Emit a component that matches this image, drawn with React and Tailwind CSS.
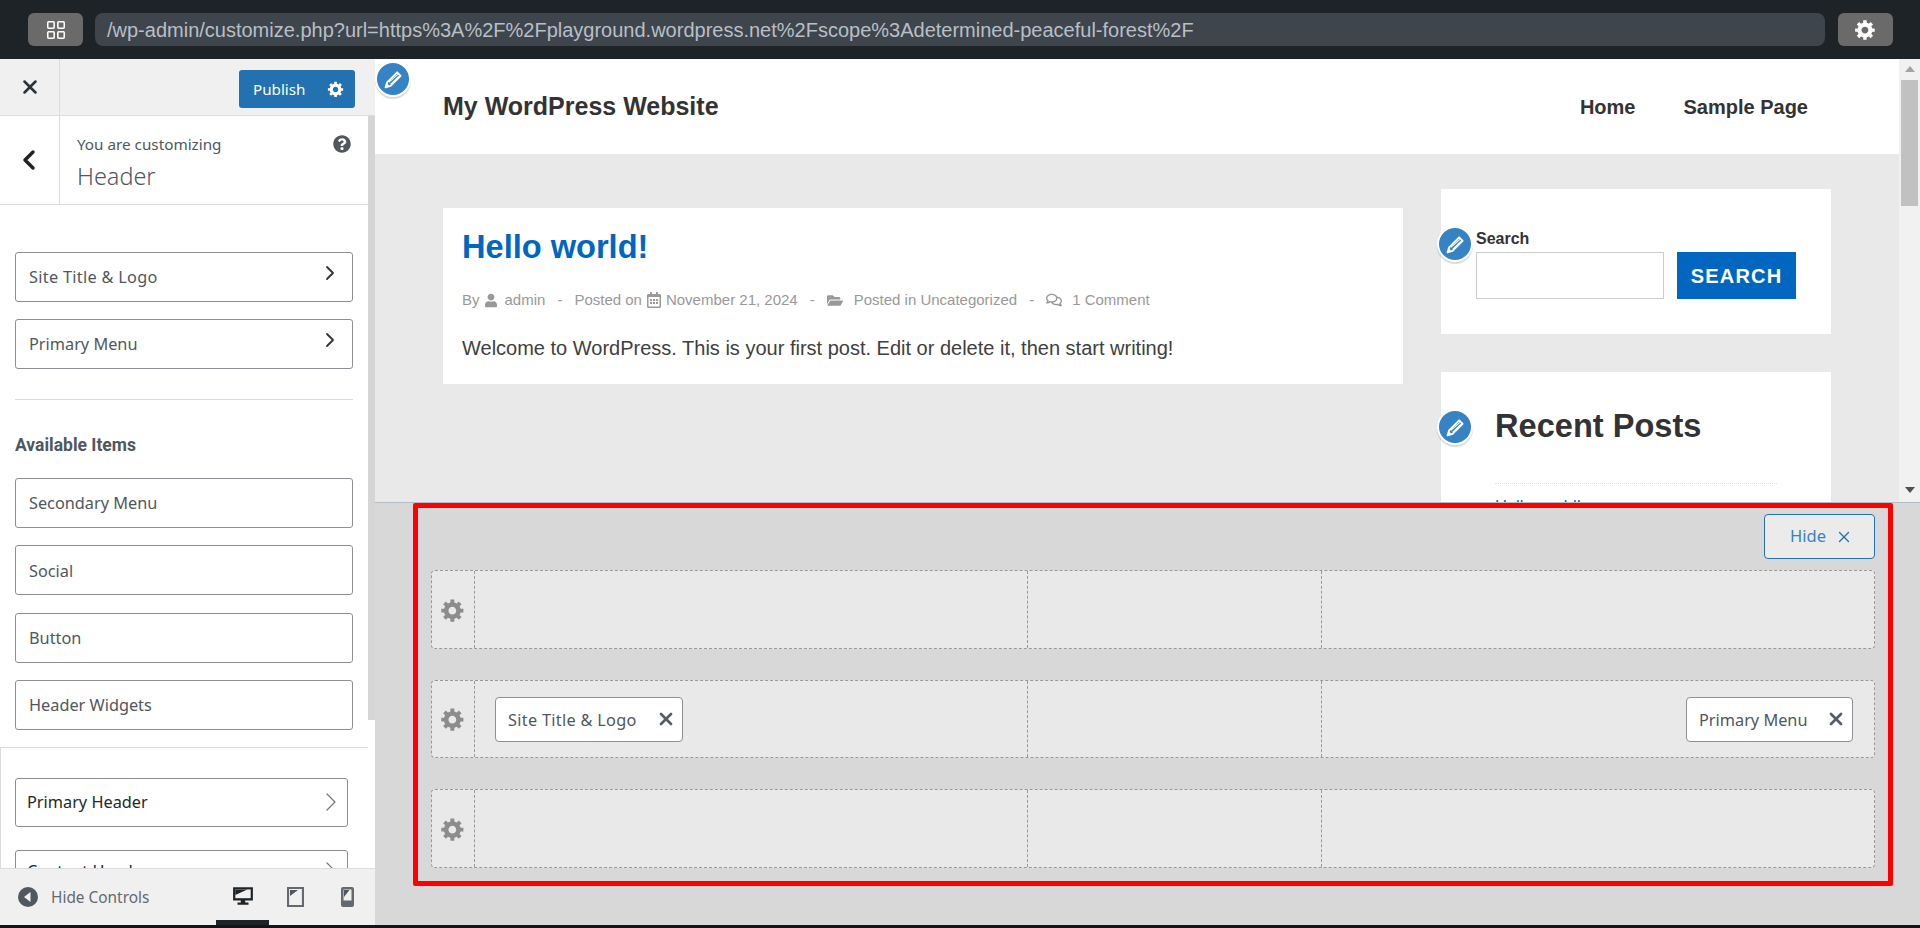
import React from 'react';
import { X, ChevronLeft, ChevronRight, LayoutGrid } from 'lucide-react';
import { FaUser, FaRegCalendarAlt, FaFolderOpen, FaRegComments, FaQuestionCircle } from 'react-icons/fa';

const ui = "font-['Noto_Sans','Open_Sans',sans-serif]";
const site = "font-['Liberation_Sans',Arial,sans-serif]";

function Gear({ className }) {
  return (
    <svg viewBox="0 0 20 20" fill="currentColor" className={className}>
      <path d="M18 12h-2.18c-.17.7-.44 1.35-.81 1.93l1.54 1.54-2.1 2.1-1.54-1.54c-.58.36-1.23.63-1.91.79V19H8v-2.18c-.68-.16-1.33-.43-1.91-.79l-1.54 1.54-2.12-2.12 1.54-1.54c-.36-.58-.63-1.23-.79-1.91H1V9.03h2.17c.16-.7.44-1.35.8-1.94L2.43 5.55l2.1-2.1 1.54 1.54c.58-.37 1.24-.64 1.93-.81V2h3v2.18c.68.16 1.33.43 1.91.79l1.54-1.54 2.12 2.12-1.54 1.54c.36.59.64 1.24.8 1.94H18V12zm-8.5 1.5c1.66 0 3-1.34 3-3s-1.34-3-3-3-3 1.34-3 3 1.34 3 3 3z" />
    </svg>
  );
}

function EditDot({ className }) {
  return (
    <div className={`flex h-[36px] w-[36px] items-center justify-center rounded-full border-2 border-white bg-[#3582c4] shadow-[0_2px_1px_rgba(0,0,0,0.15)] ${className}`}>
      <svg viewBox="0 0 20 20" className="h-[21px] w-[21px]" fill="none" stroke="white">
        <path d="M13.5 3.2l3.3 3.3-9.6 9.6-4.7 1.4 1.4-4.7z" strokeWidth="1.8" strokeLinejoin="round" />
        <path d="M5.5 12.8l8.6-7.6M7.2 14.6l7.8-7.6" strokeWidth="1" />
        <path d="M2.6 17.4l1.2-3.6 2.4 2.4z" fill="white" stroke="none" />
      </svg>
    </div>
  );
}

function SideItem({ label, arrow, textClass = '' }) {
  return (
    <div className="flex h-[50px] items-center justify-between rounded-[3px] border border-[#8c8f94] bg-white pr-[10px] pl-[13px] text-[16.3px] text-[#50575e]">
      <span className={`mt-[1px] ${textClass}`}>{label}</span>
      {arrow && <ChevronRight className="mb-[8px] h-[24px] w-[24px] text-[#2c3338]" strokeWidth={1.8} />}
    </div>
  );
}

function PanelItem({ label, shift = '' }) {
  return (
    <div className="flex h-[49px] shrink-0 items-center justify-between rounded-[3px] border border-[#8c8f94] bg-white pl-[11px] text-[16.3px] text-[#23282d]">
      <span className={shift}>{label}</span>
      <ChevronRight className={`h-[32px] w-[32px] text-[#777] ${shift}`} strokeWidth={0.9} />
    </div>
  );
}

function Chip({ label, w, textClass = '' }) {
  return (
    <div className={`flex h-[45px] items-center justify-between rounded-[4px] border border-[#8c8f94] bg-white pr-[6px] pl-[12px] text-[16.3px] text-[#50575e] ${w}`}>
      <span className={`mt-[2px] ${textClass}`}>{label}</span>
      <X className="h-[20px] w-[20px] text-[#555d66]" strokeWidth={3.2} />
    </div>
  );
}

function BuilderRow({ left, right, h }) {
  const cell = 'border-l border-dashed border-[#999999] flex items-center';
  return (
    <div className={`flex rounded-[4px] border border-dashed border-[#999999] bg-[#e9e9e9] ${h}`}>
      <div className="flex w-[42px] shrink-0 items-center justify-center">
        <Gear className="h-[26px] w-[26px] text-[#8c8c8c]" />
      </div>
      <div className={`${cell} w-[553px] pl-[20px]`}>{left}</div>
      <div className={`${cell} w-[294px]`} />
      <div className={`${cell} flex-1 justify-end pr-[21px]`}>{right}</div>
    </div>
  );
}

function Dash() {
  return <span>-</span>;
}

function SiteMeta() {
  return (
    <div className="mt-[23px] flex h-[20px] items-center text-[15px] text-[#999999]">
      <span>By</span>
      <FaUser className="mr-[8px] ml-[5px] h-[15px] w-[12px]" />
      <span>admin</span>
      <span className="mx-[12px]"><Dash /></span>
      <span>Posted on</span>
      <FaRegCalendarAlt className="mr-[5px] ml-[5px] h-[16px] w-[14px]" />
      <span>November 21, 2024</span>
      <span className="mx-[12px]"><Dash /></span>
      <FaFolderOpen className="mr-[11px] h-[15px] w-[16px]" />
      <span>Posted in Uncategorized</span>
      <span className="mx-[12px]"><Dash /></span>
      <FaRegComments className="mr-[10px] h-[16px] w-[16px]" />
      <span>1 Comment</span>
    </div>
  );
}

function Preview() {
  return (
    <div className={`flex h-[443px] shrink-0 overflow-hidden ${site}`}>
      <div className="relative flex-1 bg-[#e9e9e9]">
        <EditDot className="absolute top-[2px] left-[0px] z-10" />
        <div className="flex h-[95px] items-center bg-white pr-[91px] pl-[68px] text-[#333333]">
          <div className="text-[25px] font-bold">My WordPress Website</div>
          <div className="ml-auto flex gap-[48px] text-[20px] font-bold">
            <span>Home</span>
            <span>Sample Page</span>
          </div>
        </div>
        <div className="flex pl-[68px]">
          <div className="mt-[54px] h-[176px] w-[960px] bg-white pt-[19px] pl-[19px]">
            <div className="text-[32.6px] leading-[40px] font-bold text-[#0066bf]">Hello world!</div>
            <SiteMeta />
            <div className="mt-[26px] text-[20px] leading-[24px] text-[#404040]">
              Welcome to WordPress. This is your first post. Edit or delete it, then start writing!
            </div>
          </div>
          <div className="relative ml-[38px] w-[390px] pt-[35px]">
            <EditDot className="absolute top-[72px] -left-[4px] z-10" />
            <div className="h-[145px] bg-white pt-[40px] pl-[35px]">
              <div className="text-[16px] leading-[20px] font-bold text-[#333333]">Search</div>
              <div className="mt-[3px] flex">
                <div className="h-[47px] w-[188px] border border-[#cccccc] bg-white" />
                <div className="ml-[13px] flex h-[47px] w-[119px] items-center justify-center bg-[#0066bf] text-[20px] font-bold tracking-[1.2px] text-white">
                  SEARCH
                </div>
              </div>
            </div>
            <div className="relative mt-[38px] h-[140px] bg-white pt-[33px] pl-[54px]">
              <EditDot className="absolute top-[37px] -left-[4px]" />
              <div className="text-[32.6px] leading-[42px] font-bold text-[#333333]">Recent Posts</div>
              <div className="mt-[36px] w-[282px] border-t border-dotted border-[#dddddd]" />
              <div className="mt-[12px] text-[16.5px] leading-[20px] text-[#0066bf]">Hello world!</div>
            </div>
          </div>
        </div>
      </div>
      <div className="flex w-[21px] shrink-0 flex-col items-center bg-[#f1f1f1]">
        <div className="mt-[7px] h-0 w-0 border-x-[5px] border-b-[6px] border-x-transparent border-b-[#a3a3a3]" />
        <div className="mt-[8px] h-[126px] w-[17px] bg-[#c1c1c1]" />
        <div className="mt-auto mb-[9px] h-0 w-0 border-x-[5px] border-t-[6px] border-x-transparent border-t-[#505050]" />
      </div>
    </div>
  );
}

function Builder() {
  return (
    <div className={`flex-1 border-t border-[#b5bcc2] bg-[#d8d8d8] pr-[27px] pl-[38px] ${ui}`}>
      <div className="flex h-[383px] flex-col rounded-[2px] border-[5px] border-[#ff0000] px-[13px] pt-[6px]">
        <div className="flex justify-end">
          <div className="flex h-[45px] w-[111px] items-center gap-[9px] rounded-[4px] border border-[#2271b1] bg-[#ebebeb] pl-[25px] text-[16.5px] text-[#3582c4]">
            <span>Hide</span>
            <X className="h-[18px] w-[18px] text-[#2271b1]" strokeWidth={1.8} />
          </div>
        </div>
        <div className="mt-[11px] flex flex-col gap-[31px]">
          <BuilderRow h="h-[79px]" />
          <BuilderRow
            h="h-[78px]"
            left={<Chip label="Site Title & Logo" w="w-[188px]" textClass="tracking-[0.3px]" />}
            right={<Chip label="Primary Menu" w="w-[167px]" />}
          />
          <BuilderRow h="h-[79px]" />
        </div>
      </div>
    </div>
  );
}

function Sidebar() {
  return (
    <div className={`flex w-[375px] shrink-0 flex-col bg-white ${ui}`}>
      <div className="flex h-[57px] shrink-0 border-b border-[#dcdcde] bg-[#f0f0f1]">
        <div className="flex w-[60px] items-center justify-center border-r border-[#dcdcde]">
          <X className="h-[22px] w-[22px] text-[#2c3338]" strokeWidth={2.8} />
        </div>
        <div className="mt-[11px] ml-[179px] flex h-[38px] w-[116px] items-center rounded-[3px] bg-[#2271b1] pl-[14px] text-[15.2px] text-white">
          <span>Publish</span>
          <Gear className="mr-[10px] ml-auto h-[18px] w-[18px]" />
        </div>
      </div>
      <div className="flex min-h-0 flex-1">
        <div className="w-[368px] overflow-hidden">
          <div className="flex h-[89px] border-b border-[#dcdcde]">
            <div className="flex w-[60px] items-center justify-center border-r border-[#dcdcde]">
              <ChevronLeft className="mr-[2px] h-[32px] w-[32px] text-[#1d2327]" strokeWidth={2.6} />
            </div>
            <div className="flex-1 pt-[16px] pl-[17px]">
              <div className="flex items-center justify-between pr-[17px] text-[15.25px] leading-[24px] text-[#50575e]">
                <span>You are customizing</span>
                <FaQuestionCircle className="h-[18px] w-[18px] text-[#50575e]" />
              </div>
              <div className="mt-[3px] text-[23.4px] leading-[34px] font-light text-[#50575e]">Header</div>
            </div>
          </div>
          <div className="px-[15px] pt-[47px]">
            <div className="flex flex-col gap-[17px]">
              <SideItem label="Site Title & Logo" arrow textClass="tracking-[0.3px]" />
              <SideItem label="Primary Menu" arrow />
            </div>
            <div className="mt-[30px] border-t border-[#dcdcde]" />
            <div className="mt-[35px] font-['Roboto',sans-serif] text-[17.5px] leading-[20px] font-bold text-[#50575e]">Available Items</div>
            <div className="mt-[23px] flex flex-col gap-[17.3px]">
              <SideItem label="Secondary Menu" />
              <SideItem label="Social" />
              <SideItem label="Button" />
              <SideItem label="Header Widgets" />
            </div>
          </div>
          <div className="mt-[17px] h-[200px] border-t border-l border-[#dcdcde] pt-[30px] pr-[20px] pl-[14px]">
            <div className="flex flex-col gap-[23px]">
              <PanelItem label="Primary Header" />
              <PanelItem label="Content Header" shift="mb-[6px]" />
            </div>
          </div>
        </div>
        <div className="w-[7px] shrink-0">
          <div className="h-[604px] bg-[#d5d5d5]" />
        </div>
      </div>
      <div className="flex h-[57px] shrink-0 items-center border-t border-[#dcdcde] bg-[#f0f0f1] pl-[18px] text-[15.4px] text-[#646970]">
        <svg viewBox="0 0 20 20" className="h-[20px] w-[20px]">
          <circle cx="10" cy="10" r="10" fill="#50575e" />
          <path d="M12.5 5v10L6 10z" fill="#f0f0f1" />
        </svg>
        <span className="mt-[1px] ml-[13px]">Hide Controls</span>
        <div className="ml-auto flex h-full pr-[13px]">
          <div className="flex w-[53px] items-start justify-center border-b-[5px] border-[#1d2327] pt-[16px]">
            <svg viewBox="0 0 20 20" className="h-[22px] w-[22px]">
              <path d="M1 2h18v12H12v2h3v2H5v-2h3v-2H1z" fill="#1d2327" />
              <path d="M3 4h14v8H3z" fill="#f0f0f1" />
              <path d="M3 4h11L3 9z" fill="#1d2327" />
            </svg>
          </div>
          <div className="ml-[11px] flex w-[30px] items-start justify-center pt-[18px]">
            <svg viewBox="0 0 17 20" className="h-[20px] w-[17px]">
              <path d="M1 1h15v18H1z" fill="#f0f0f1" stroke="#646970" strokeWidth="2.2" />
              <path d="M3 3h8L3 9z" fill="#50575e" />
            </svg>
          </div>
          <div className="ml-[22px] flex w-[30px] items-start justify-center pt-[18px]">
            <svg viewBox="0 0 13 20" className="h-[20px] w-[13px]">
              <path d="M2 0h9a2 2 0 0 1 2 2v16a2 2 0 0 1-2 2H2a2 2 0 0 1-2-2V2a2 2 0 0 1 2-2z" fill="#646970" />
              <path d="M2.5 2.5h8v11h-8z" fill="#f0f0f1" />
              <path d="M3 3h5.5L3 10z" fill="#50575e" />
            </svg>
          </div>
        </div>
      </div>
    </div>
  );
}

export default function App() {
  return (
    <div className="flex h-[928px] w-[1920px] flex-col overflow-hidden bg-[#111418]">
      <div className="flex h-[59px] shrink-0 items-center gap-[12px] bg-[#1e2327] pl-[28px]">
        <div className="flex h-[33px] w-[55px] items-center justify-center rounded-[6px] bg-[#6a6a6a]">
          <LayoutGrid className="h-[22px] w-[22px] text-white" strokeWidth={1.7} />
        </div>
        <div className={`flex h-[33px] w-[1730px] items-center rounded-[8px] bg-[#3f454d] pl-[12px] text-[20px] text-[#b8bfc6] ${site}`}>
          /wp-admin/customize.php?url=https%3A%2F%2Fplayground.wordpress.net%2Fscope%3Adetermined-peaceful-forest%2F
        </div>
        <div className="ml-[1px] flex h-[33px] w-[55px] items-center justify-center rounded-[6px] bg-[#6a6a6a]">
          <Gear className="h-[23px] w-[23px] text-white" />
        </div>
      </div>
      <div className="flex h-[866px] shrink-0">
        <Sidebar />
        <div className="flex min-w-0 flex-1 flex-col">
          <Preview />
          <Builder />
        </div>
      </div>
    </div>
  );
}
